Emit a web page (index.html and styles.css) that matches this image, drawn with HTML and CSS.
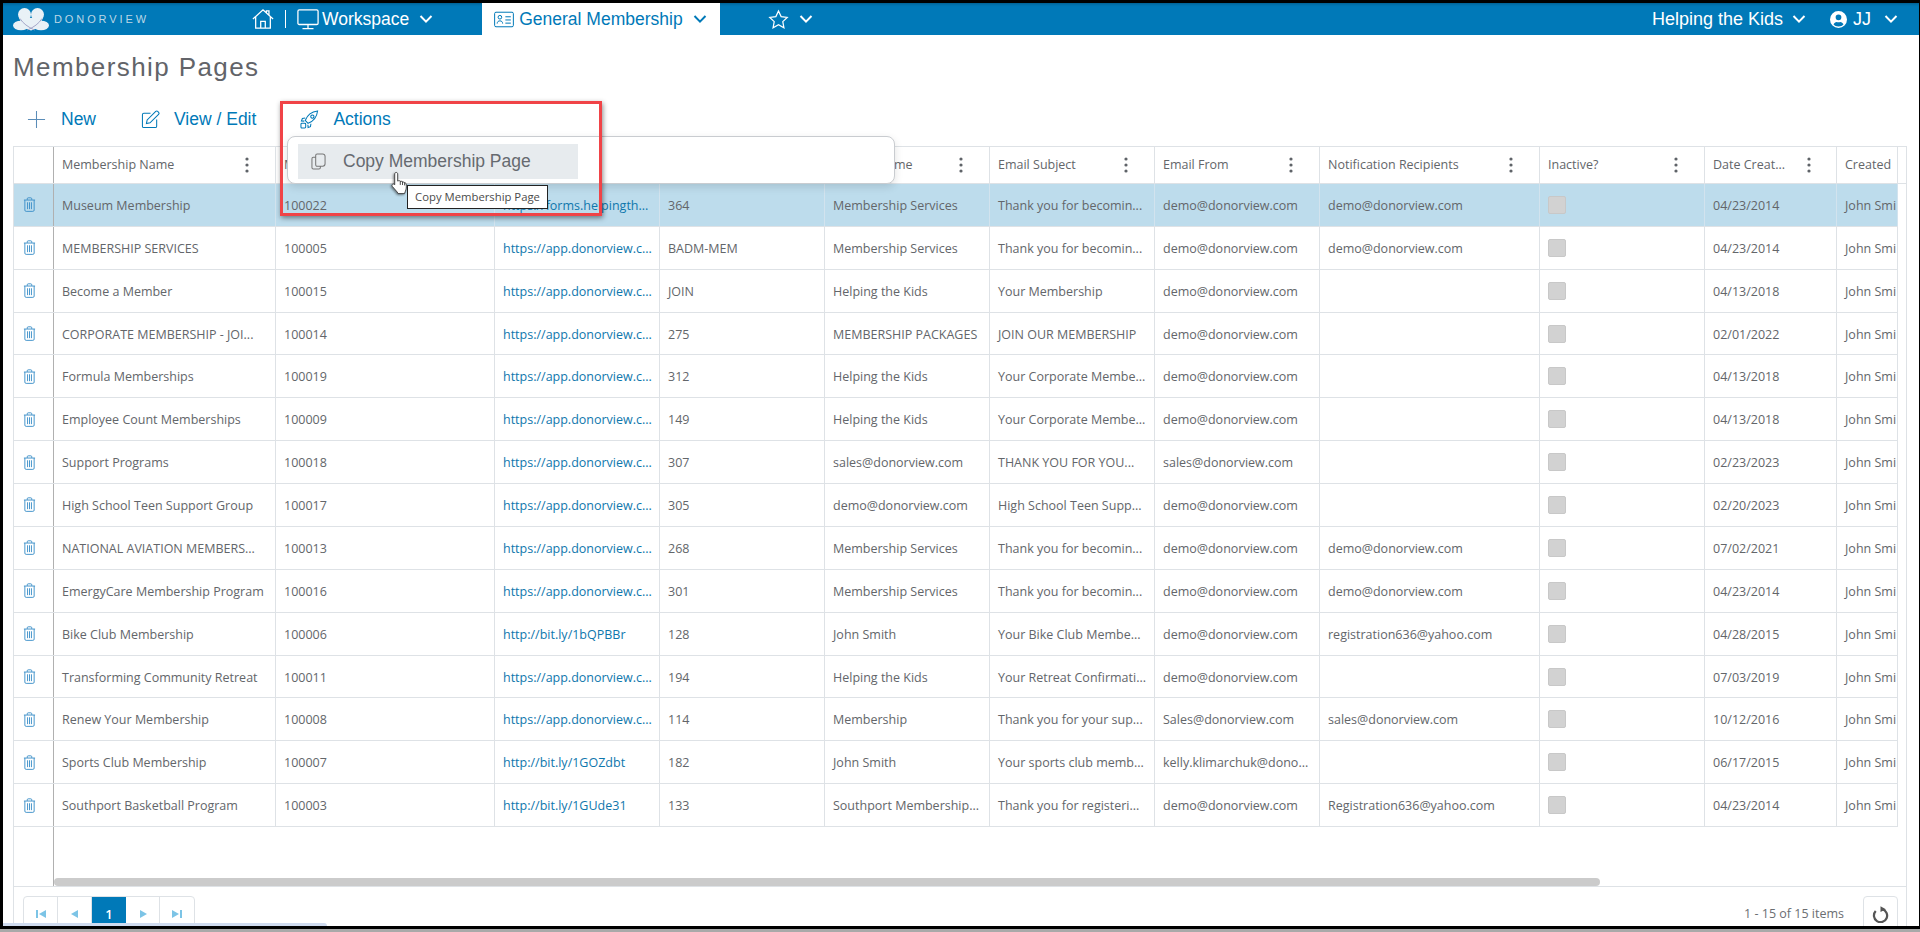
FILE: index.html
```html
<!DOCTYPE html>
<html lang="en">
<head>
<meta charset="utf-8">
<title>Membership Pages</title>
<link rel="stylesheet" href="styles.css">
</head>
<body>
<svg class="defs" width="0" height="0" aria-hidden="true">
  <symbol id="trash" viewBox="0 0 14 16"><path d="M1 3.200h12M4.600 3V1.800a1 1 0 0 1 1-1h2.800a1 1 0 0 1 1 1V3M2 3.200V14a1.400 1.400 0 0 0 1.400 1.400h7.200A1.400 1.400 0 0 0 12 14V3.200M4.900 5.600v7.400M7 5.600v7.400M9.100 5.600v7.400"/></symbol>
  <symbol id="chev" viewBox="0 0 14 10"><path d="M1.500 2 7 7.600 12.500 2"/></symbol>
  <symbol id="dots" viewBox="0 0 4 16"><circle cx="2" cy="2" r="1.600"/><circle cx="2" cy="8" r="1.600"/><circle cx="2" cy="14" r="1.600"/></symbol>
</svg>
<div class="frame">
  <header class="topbar">
    <div class="logo">
      <svg class="logo-mark" viewBox="0 0 36 24"><g class="logo-fill"><ellipse cx="8" cy="18.500" rx="8" ry="4.800"/><ellipse cx="28" cy="18.500" rx="8" ry="4.800"/><circle cx="11.500" cy="7.500" r="6.500"/><circle cx="24.500" cy="7.500" r="6.500"/><path d="M6 11h24l-5 10-7 2.500L11 21z"/></g><path class="logo-line" d="M7 11.500c3 5 8 8.500 14.500 11.500M29 11.500c-3 5-8 8.500-14.500 11.500"/></svg>
      <span class="logo-text">DONORVIEW</span>
    </div>
    <nav class="nav">
      <svg class="ico-home" viewBox="0 0 24 24"><path d="M1 12 12 2l11 10M18.500 7.800V3.200h-2.800V5.300M4 9.800V22h16V9.800M9.500 22v-7.500h5V22"/></svg>
      <span class="sep"></span>
      <svg class="ico-monitor" viewBox="0 0 24 24"><path d="M2.500 2h19a1.500 1.500 0 0 1 1.500 1.500v13a1.500 1.500 0 0 1-1.500 1.500h-19A1.500 1.500 0 0 1 1 16.500v-13A1.500 1.500 0 0 1 2.500 2zM12 18v4M6 22.500h12"/></svg>
      <span class="nav-label">Workspace</span>
      <svg class="chev chev-workspace"><use href="#chev"/></svg>
      <div class="tab">
        <svg class="ico-card" viewBox="0 0 22 18"><rect x=".7" y="1" width="20.600" height="16" rx="1.500"/><circle cx="6.500" cy="6.500" r="2"/><path d="M3.500 13.500c0-2 1.300-3 3-3s3 1 3 3M12.500 6h6M12.500 9.500h6M12.500 13h6"/></svg>
        <span>General Membership</span>
        <svg class="chev chev-tab"><use href="#chev"/></svg>
      </div>
      <svg class="ico-star" viewBox="0 0 24 24"><path d="M12 2.200l3 6.500 7 .9-5.100 4.800 1.300 7-6.200-3.500-6.200 3.500 1.300-7L2 9.600l7-.9z"/></svg>
      <svg class="chev chev-star"><use href="#chev"/></svg>
    </nav>
    <div class="account">
      <span class="nav-label org">Helping the Kids</span>
      <svg class="chev chev-org"><use href="#chev"/></svg>
      <svg class="ico-user" viewBox="0 0 16 16"><path fill-rule="evenodd" d="M8 0a8 8 0 1 1 0 16A8 8 0 0 1 8 0zm0 3.200a2.700 2.700 0 1 0 0 5.400 2.700 2.700 0 0 0 0-5.400zM3.300 12.500c1 1.300 2.700 2.100 4.700 2.100s3.700-.8 4.700-2.100c-.6-1.300-1.800-2.200-3-2.200-.5 0-1 .4-1.700.4s-1.200-.4-1.700-.4c-1.200 0-2.400.9-3 2.200z"/></svg>
      <span class="nav-label jj">JJ</span>
      <svg class="chev chev-user"><use href="#chev"/></svg>
    </div>
  </header>

  <main class="page">
    <h1 class="title">Membership Pages</h1>
    <div class="toolbar">
      <button class="tool tool-new"><svg viewBox="0 0 20 20"><path d="M10 1v18M1 10h18"/></svg>New</button>
      <button class="tool tool-edit"><svg viewBox="0 0 20 20"><path d="M10 3.500H3a1.500 1.500 0 0 0-1.500 1.500v12A1.500 1.500 0 0 0 3 18.500h12a1.500 1.500 0 0 0 1.500-1.500v-7M6.500 10.500l-.8 3.800 3.800-.8 9-9a1.500 1.500 0 0 0 0-2.100l-.9-.9a1.500 1.500 0 0 0-2.100 0z"/></svg>View / Edit</button>
      <button class="tool tool-actions"><svg viewBox="0 0 20 20"><path d="M7 12.500 5.500 11c1.500-4 4.500-9 13-10-1 8.500-6 11.500-10 13zM13 5.200a1.700 1.700 0 1 0 .01 0M5.500 8.500 2.500 9l-1 2.500 3 .2M11.500 14.500 11 17.500l-2.500 1-.2-3"/><rect x="1" y="14" width="5" height="5" rx="1"/></svg>Actions</button>
    </div>

    <section class="grid">
      <div class="row head">
        <div class="cell"></div>
        <div class="cell"><span>Membership Name</span><svg class="dots"><use href="#dots"/></svg></div>
        <div class="cell"><span>Membership ID</span><svg class="dots"><use href="#dots"/></svg></div>
        <div class="cell"><span>URL</span><svg class="dots"><use href="#dots"/></svg></div>
        <div class="cell"><span>Code</span><svg class="dots"><use href="#dots"/></svg></div>
        <div class="cell"><span>Sender Name</span><svg class="dots"><use href="#dots"/></svg></div>
        <div class="cell"><span>Email Subject</span><svg class="dots"><use href="#dots"/></svg></div>
        <div class="cell"><span>Email From</span><svg class="dots"><use href="#dots"/></svg></div>
        <div class="cell"><span>Notification Recipients</span><svg class="dots"><use href="#dots"/></svg></div>
        <div class="cell"><span>Inactive?</span><svg class="dots"><use href="#dots"/></svg></div>
        <div class="cell"><span>Date Creat...</span><svg class="dots dots-date"><use href="#dots"/></svg></div>
        <div class="cell cut"><span>Created</span></div>
      </div>
      <div class="body">
        <div class="rows">
          <div class="row sel"><div class="cell"><svg class="trash"><use href="#trash"/></svg></div><div class="cell">Museum Membership</div><div class="cell">100022</div><div class="cell link">https://forms.helpingth...</div><div class="cell">364</div><div class="cell">Membership Services</div><div class="cell">Thank you for becomin...</div><div class="cell">demo@donorview.com</div><div class="cell">demo@donorview.com</div><div class="cell"><i class="check"></i></div><div class="cell">04/23/2014</div><div class="cell cut">John Smi</div></div>
          <div class="row"><div class="cell"><svg class="trash"><use href="#trash"/></svg></div><div class="cell">MEMBERSHIP SERVICES</div><div class="cell">100005</div><div class="cell link">https://app.donorview.c...</div><div class="cell">BADM-MEM</div><div class="cell">Membership Services</div><div class="cell">Thank you for becomin...</div><div class="cell">demo@donorview.com</div><div class="cell">demo@donorview.com</div><div class="cell"><i class="check"></i></div><div class="cell">04/23/2014</div><div class="cell cut">John Smi</div></div>
          <div class="row"><div class="cell"><svg class="trash"><use href="#trash"/></svg></div><div class="cell">Become a Member</div><div class="cell">100015</div><div class="cell link">https://app.donorview.c...</div><div class="cell">JOIN</div><div class="cell">Helping the Kids</div><div class="cell">Your Membership</div><div class="cell">demo@donorview.com</div><div class="cell"></div><div class="cell"><i class="check"></i></div><div class="cell">04/13/2018</div><div class="cell cut">John Smi</div></div>
          <div class="row"><div class="cell"><svg class="trash"><use href="#trash"/></svg></div><div class="cell">CORPORATE MEMBERSHIP - JOI...</div><div class="cell">100014</div><div class="cell link">https://app.donorview.c...</div><div class="cell">275</div><div class="cell">MEMBERSHIP PACKAGES</div><div class="cell">JOIN OUR MEMBERSHIP</div><div class="cell">demo@donorview.com</div><div class="cell"></div><div class="cell"><i class="check"></i></div><div class="cell">02/01/2022</div><div class="cell cut">John Smi</div></div>
          <div class="row"><div class="cell"><svg class="trash"><use href="#trash"/></svg></div><div class="cell">Formula Memberships</div><div class="cell">100019</div><div class="cell link">https://app.donorview.c...</div><div class="cell">312</div><div class="cell">Helping the Kids</div><div class="cell">Your Corporate Membe...</div><div class="cell">demo@donorview.com</div><div class="cell"></div><div class="cell"><i class="check"></i></div><div class="cell">04/13/2018</div><div class="cell cut">John Smi</div></div>
          <div class="row"><div class="cell"><svg class="trash"><use href="#trash"/></svg></div><div class="cell">Employee Count Memberships</div><div class="cell">100009</div><div class="cell link">https://app.donorview.c...</div><div class="cell">149</div><div class="cell">Helping the Kids</div><div class="cell">Your Corporate Membe...</div><div class="cell">demo@donorview.com</div><div class="cell"></div><div class="cell"><i class="check"></i></div><div class="cell">04/13/2018</div><div class="cell cut">John Smi</div></div>
          <div class="row"><div class="cell"><svg class="trash"><use href="#trash"/></svg></div><div class="cell">Support Programs</div><div class="cell">100018</div><div class="cell link">https://app.donorview.c...</div><div class="cell">307</div><div class="cell">sales@donorview.com</div><div class="cell">THANK YOU FOR YOU...</div><div class="cell">sales@donorview.com</div><div class="cell"></div><div class="cell"><i class="check"></i></div><div class="cell">02/23/2023</div><div class="cell cut">John Smi</div></div>
          <div class="row"><div class="cell"><svg class="trash"><use href="#trash"/></svg></div><div class="cell">High School Teen Support Group</div><div class="cell">100017</div><div class="cell link">https://app.donorview.c...</div><div class="cell">305</div><div class="cell">demo@donorview.com</div><div class="cell">High School Teen Supp...</div><div class="cell">demo@donorview.com</div><div class="cell"></div><div class="cell"><i class="check"></i></div><div class="cell">02/20/2023</div><div class="cell cut">John Smi</div></div>
          <div class="row"><div class="cell"><svg class="trash"><use href="#trash"/></svg></div><div class="cell">NATIONAL AVIATION MEMBERS...</div><div class="cell">100013</div><div class="cell link">https://app.donorview.c...</div><div class="cell">268</div><div class="cell">Membership Services</div><div class="cell">Thank you for becomin...</div><div class="cell">demo@donorview.com</div><div class="cell">demo@donorview.com</div><div class="cell"><i class="check"></i></div><div class="cell">07/02/2021</div><div class="cell cut">John Smi</div></div>
          <div class="row"><div class="cell"><svg class="trash"><use href="#trash"/></svg></div><div class="cell">EmergyCare Membership Program</div><div class="cell">100016</div><div class="cell link">https://app.donorview.c...</div><div class="cell">301</div><div class="cell">Membership Services</div><div class="cell">Thank you for becomin...</div><div class="cell">demo@donorview.com</div><div class="cell">demo@donorview.com</div><div class="cell"><i class="check"></i></div><div class="cell">04/23/2014</div><div class="cell cut">John Smi</div></div>
          <div class="row"><div class="cell"><svg class="trash"><use href="#trash"/></svg></div><div class="cell">Bike Club Membership</div><div class="cell">100006</div><div class="cell link">http://bit.ly/1bQPBBr</div><div class="cell">128</div><div class="cell">John Smith</div><div class="cell">Your Bike Club Membe...</div><div class="cell">demo@donorview.com</div><div class="cell">registration636@yahoo.com</div><div class="cell"><i class="check"></i></div><div class="cell">04/28/2015</div><div class="cell cut">John Smi</div></div>
          <div class="row"><div class="cell"><svg class="trash"><use href="#trash"/></svg></div><div class="cell">Transforming Community Retreat</div><div class="cell">100011</div><div class="cell link">https://app.donorview.c...</div><div class="cell">194</div><div class="cell">Helping the Kids</div><div class="cell">Your Retreat Confirmati...</div><div class="cell">demo@donorview.com</div><div class="cell"></div><div class="cell"><i class="check"></i></div><div class="cell">07/03/2019</div><div class="cell cut">John Smi</div></div>
          <div class="row"><div class="cell"><svg class="trash"><use href="#trash"/></svg></div><div class="cell">Renew Your Membership</div><div class="cell">100008</div><div class="cell link">https://app.donorview.c...</div><div class="cell">114</div><div class="cell">Membership</div><div class="cell">Thank you for your sup...</div><div class="cell">Sales@donorview.com</div><div class="cell">sales@donorview.com</div><div class="cell"><i class="check"></i></div><div class="cell">10/12/2016</div><div class="cell cut">John Smi</div></div>
          <div class="row"><div class="cell"><svg class="trash"><use href="#trash"/></svg></div><div class="cell">Sports Club Membership</div><div class="cell">100007</div><div class="cell link">http://bit.ly/1GOZdbt</div><div class="cell">182</div><div class="cell">John Smith</div><div class="cell">Your sports club memb...</div><div class="cell">kelly.klimarchuk@dono...</div><div class="cell"></div><div class="cell"><i class="check"></i></div><div class="cell">06/17/2015</div><div class="cell cut">John Smi</div></div>
          <div class="row"><div class="cell"><svg class="trash"><use href="#trash"/></svg></div><div class="cell">Southport Basketball Program</div><div class="cell">100003</div><div class="cell link">http://bit.ly/1GUde31</div><div class="cell">133</div><div class="cell">Southport Membership...</div><div class="cell">Thank you for registeri...</div><div class="cell">demo@donorview.com</div><div class="cell">Registration636@yahoo.com</div><div class="cell"><i class="check"></i></div><div class="cell">04/23/2014</div><div class="cell cut">John Smi</div></div>
        </div>
        <div class="spacer"><div class="scrollbar"></div></div>
      </div>
      <footer class="pager-bar">
        <div class="pager">
          <span class="pg"><svg viewBox="0 0 10 10"><path d="M0 1h2v8H0zM10 1v8L3 5z"/></svg></span>
          <span class="pg"><svg viewBox="0 0 10 10"><path d="M8 1v8L1 5z"/></svg></span>
          <span class="pg on">1</span>
          <span class="pg"><svg viewBox="0 0 10 10"><path d="M2 1v8l7-4z"/></svg></span>
          <span class="pg"><svg viewBox="0 0 10 10"><path d="M8 1h2v8H8zM0 1v8l7-4z"/></svg></span>
        </div>
        <span class="count">1 - 15 of 15 items</span>
        <span class="refresh"><svg viewBox="0 0 16 16"><path d="M9.500 3A6.200 6.200 0 1 1 3.500 4.800"/><path class="refresh-tip" d="M8 .2l5 2.800L8 5.600z"/></svg></span>
      </footer>
    </section>

    <div class="menu">
      <div class="menu-item"><svg viewBox="0 0 16 18"><path d="M5 4.500H2.500A1.500 1.500 0 0 0 1 6v9.500A1.500 1.500 0 0 0 2.500 17h6a1.500 1.500 0 0 0 1.500-1.500V14M6.500 1h6A2.500 2.500 0 0 1 15 3.500v8a2.500 2.500 0 0 1-2.500 2.500h-6A1.500 1.500 0 0 1 5 12.500v-10A1.500 1.500 0 0 1 6.500 1z"/></svg>Copy Membership Page</div>
    </div>
    <div class="tooltip">Copy Membership Page</div>
    <svg class="cursor" viewBox="0 0 18 26"><path d="M5 1.500c.9 0 1.600.7 1.600 1.600v7.400l1-.4c.8-.2 1.400.1 1.700.7.900-.4 1.700-.1 2 .6.900-.3 1.700 0 2 .8.900-.2 1.900.3 2.100 1.400.4 3 .2 5.500-1 8l-.7 1.900H7l-1-1.700L1 16c-.6-1-.3-1.800.3-2.200.9-.5 1.800-.1 2.200.5V3.100c0-.9.700-1.600 1.500-1.600zM9.300 10.500v4M11.600 11.100v3.500M13.800 12v3"/></svg>
    <div class="callout"></div>
  </main>
  <div class="status"></div>
</div>
<div class="os-strip"></div>
</body>
</html>
```
FILE: styles.css
```css
* { box-sizing: border-box; }
html, body { margin: 0; height: 100%; }
body { background: #000; overflow: hidden; font-family: "Open Sans", sans-serif; display: flex; flex-direction: column; }
.defs { position: absolute; }
.frame { position: relative; height: 923px; flex: none; margin: 3px 1px 0 3px; display: flex; flex-direction: column; background: #fff; overflow: hidden; }
.os-strip { height: 3px; margin-top: 3px; flex: none; background: #a9a9a9; }

.topbar { height: 32px; flex: none; background: #0079b8; display: flex; align-items: stretch; color: #fff; font-family: "Liberation Sans", sans-serif; font-size: 17.500px; box-shadow: inset 0 3px 3px -2px rgba(0,0,0,.25); }
.logo { width: 249px; flex: none; display: flex; align-items: center; padding: 0 0 0 10px; }
.logo-mark { width: 36px; height: 24px; margin-right: 5px; }
.logo-fill { fill: #e9f1f6; }
.logo-line { fill: none; stroke: #a4a6c8; stroke-width: 1; }
.logo-text { font-size: 11px; letter-spacing: 2.900px; color: #bcd7e6; }
.nav { display: flex; align-items: center; flex: 1; }
.nav svg, .account svg { flex: none; fill: none; stroke: currentColor; stroke-width: 1.400; }
.ico-home { width: 22px; height: 22px; margin-right: 11px; }
.sep { width: 1px; height: 18px; background: #fff; margin-right: 11px; }
.ico-monitor { width: 22px; height: 22px; margin-right: 3px; }
.nav-label { white-space: nowrap; }
.org, .jj { font-size: 18px; }
.chev { width: 14px; height: 10px; }
.nav .chev, .account .chev { stroke-width: 2; }
.chev-workspace { margin: 0 49px 0 10px; }
.tab { width: 238px; align-self: stretch; background: #fff; color: #0079b8; display: flex; align-items: center; padding-left: 12px; flex: none; }
.ico-card { width: 20px; height: 17px; margin-right: 5px; stroke-width: 1.100 !important; }
.chev-tab { margin-left: 10px; }
.ico-star { width: 21px; height: 21px; margin-left: 48px; }
.chev-star { margin-left: 10px; }
.account { display: flex; align-items: center; flex: none; padding-right: 21px; }
.chev-org { margin: 0 24px 0 9px; }
.ico-user { width: 17px; height: 17px; fill: #fff !important; stroke: none !important; margin-right: 6px; }
.chev-user { margin-left: 13px; }

.page { position: relative; flex: 1; min-height: 0; display: flex; flex-direction: column; padding: 0 12px 0 10px; font-family: "Liberation Sans", sans-serif; }
.title { margin: 16px 0 0; font-size: 26px; line-height: 32px; font-weight: 400; letter-spacing: 1.400px; color: #626469; }
.toolbar { display: flex; align-items: center; height: 36px; margin-top: 18px; padding-left: 14px; }
.tool { display: flex; align-items: center; border: 0; padding: 0; background: none; font: 17.500px "Liberation Sans", sans-serif; color: #0079b8; }
.tool svg { width: 19px; height: 19px; fill: none; stroke: #0079b8; stroke-width: 1.100; margin-right: 14px; }
.tool-new svg { stroke: #5b8db8; margin-right: 15px; }
.tool-edit { margin-left: 45px; }
.tool-actions { margin-left: 44px; }
.tool-actions svg { margin-right: 14px; }

.grid { margin-top: 9px; flex: 1; min-height: 0; display: flex; flex-direction: column; border: 1px solid #dee2e6; border-bottom: 0; font-family: "Open Sans", sans-serif; font-size: 12.500px; color: #63666a; }
.row { display: grid; grid-template-columns: 40px 222px 219px 165px 165px 165px 165px 165px 220px 165px 132px 61px; }
.head { height: 37px; flex: none; border-bottom: 1px solid #dee2e6; }
.cell { display: flex; align-items: center; min-width: 0; padding: 0 8px; border-right: 1px solid #dee2e6; white-space: nowrap; overflow: hidden; }
.row:not(.head) .cell { display: block; line-height: 42px; padding: 1px 0 0 8px; }
.row:not(.head) .cell:first-child { padding: 0 0 0 9px; display: flex; align-items: center; }
.row > .cell:first-child { border-right-color: #b0b0b0; }
.head .cell span { flex: 1; min-width: 0; overflow: hidden; padding-bottom: 2px; }
.cut { padding-right: 0; }
.dots { width: 4px; height: 16px; flex: none; fill: #5f6368; margin: 0 18px 0 8px; }
.dots-date { margin-right: 17px; }
.body { flex: 1; min-height: 0; display: flex; flex-direction: column; }
.rows { height: 643px; flex: none; display: grid; grid-template-rows: repeat(15, minmax(0, 1fr)); }
.rows .row { border-bottom: 1px solid #dee2e6; width: 1884px; min-height: 0; overflow: hidden; }
.sel { background: #bddcec; }
.sel .cell { border-right-color: #d2e3ee; }
.link { color: #0f77ad; }
.trash { width: 13px; height: 15px; fill: none; stroke: #3a8fc8; stroke-width: 1; }
.check { display: block; width: 18px; height: 18px; margin-top: 11px; border-radius: 2px; background: #d2d2d2; border: 1px solid #c8c8c8; }
.spacer { flex: 1; position: relative; min-height: 0; }
.spacer::before { content: ""; position: absolute; left: 39px; top: 0; bottom: 0; width: 1px; background: #b0b0b0; }
.scrollbar { position: absolute; left: 40px; bottom: 0; width: 1546px; height: 8px; border-radius: 4px; background: #cbcbcb; }
.pager-bar { height: 40px; flex: none; border-top: 1px solid #dee2e6; display: flex; align-items: flex-start; padding: 9px 8px 0 9px; }
.pager { display: flex; height: 36px; border: 1px solid #dee2e6; border-radius: 4px; flex: none; }
.pg { width: 34px; display: flex; align-items: center; justify-content: center; border-right: 1px solid #dee2e6; color: #fff; font-weight: 600; font-size: 13px; }
.pg:last-child { border-right: 0; }
.pg svg { width: 10px; height: 10px; fill: #7cc4e6; }
.pg.on { background: #0079b8; border-right: 0; }
.count { margin: 8px 19px 0 auto; color: #6b6e72; line-height: 20px; }
.refresh { width: 35px; height: 36px; flex: none; border: 1px solid #dee2e6; border-radius: 4px; display: flex; align-items: center; justify-content: center; }
.refresh svg { width: 17px; height: 17px; fill: none; stroke: #555; stroke-width: 2.100; }
.refresh-tip { fill: #555; stroke: none; }

.menu { position: absolute; left: 284px; top: 101px; width: 608px; height: 48px; padding: 7px 0 0 10px; background: #fff; border: 1px solid #c9ccd0; border-radius: 8px; box-shadow: 0 3px 8px rgba(0,0,0,.12); }
.menu-item { width: 280px; height: 35px; display: flex; align-items: center; padding-left: 13px; background: #e7ebee; font-size: 17.500px; color: #666a70; }
.menu-item svg { width: 15px; height: 17px; fill: none; stroke: #777; stroke-width: 1.100; margin-right: 17px; }
.tooltip { position: absolute; left: 404px; top: 150px; width: 141px; height: 24px; background: #fff; border: 1px solid #222; font: 11.300px/22px "Open Sans", sans-serif; color: #4b4b4b; text-align: center; white-space: nowrap; }
.cursor { position: absolute; left: 388px; top: 136px; width: 18px; height: 25px; fill: #fff; stroke: #333; stroke-width: .9; filter: drop-shadow(-1px 1px 1px rgba(0,0,0,.45)); }
.callout { position: absolute; left: 277px; top: 66px; width: 322px; height: 115px; border: 3px solid #f04347; box-shadow: 1px 2px 5px rgba(0,0,0,.45); pointer-events: none; }
.status { position: absolute; left: 0; bottom: 0; width: 324px; height: 3px; background: #cfdbef; border-radius: 0 4px 0 0; }
```
